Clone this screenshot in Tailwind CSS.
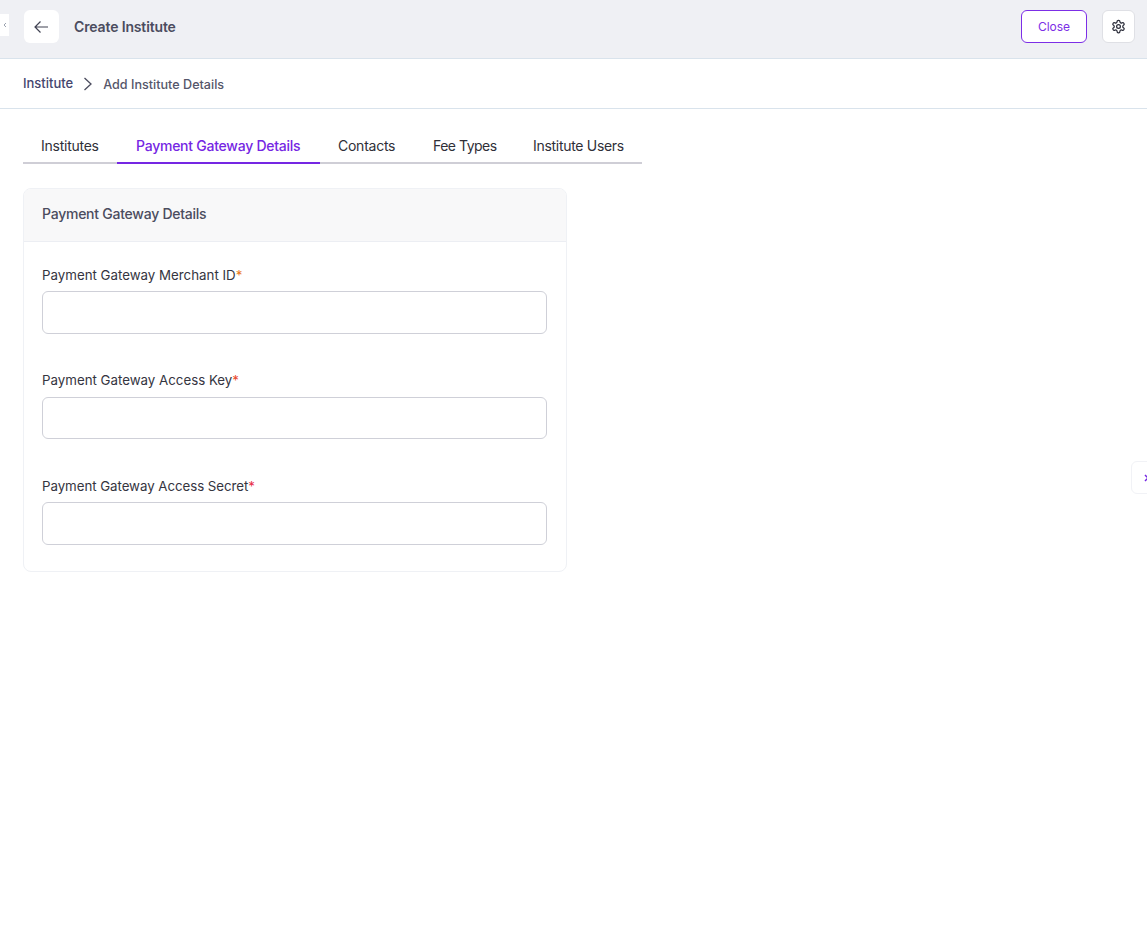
<!DOCTYPE html>
<html lang="en">
<head>
  <meta charset="UTF-8" />
  <title>Create Institute</title>
  <script src="https://cdn.jsdelivr.net/npm/@tailwindcss/browser@4"></script>
</head>
<body class="bg-white font-['Inter',sans-serif] min-h-screen overflow-hidden relative">

  <!-- sidebar toggle -->
  <div class="absolute left-0 top-[14px] w-[9px] h-[22px] bg-white flex items-center justify-center">
    <svg class="w-[6px] h-[6px]" viewBox="0 0 6 6" fill="none" stroke="#9ca3af" stroke-width="1"><path d="M4 1 L2 3 L4 5"/></svg>
  </div>

  <!-- Header -->
  <div class="h-[59px] bg-[#eff0f4] border-b border-[#d9e3ec] flex items-center pl-6 pr-3 pb-[5px]">
    <button class="w-[35px] h-[33px] bg-white rounded-md flex items-center justify-center">
      <svg class="w-[16px] h-[16px] -ml-[1px]" viewBox="0 0 16 16" fill="none" stroke="#404252" stroke-width="1.2"><path d="M15 8H2M7.5 2.5 2 8l5.500 5.500"/></svg>
    </button>
    <h1 class="ml-[15px] text-sm font-semibold tracking-[-0.14px] text-[#4b4c5e]">Create Institute</h1>
    <button class="ml-auto w-[66px] h-[33px] bg-white border border-[#7c2ee6] rounded-md text-xs text-[#7c2ee6]">Close</button>
    <button class="ml-[15px] w-[33px] h-[33px] bg-white border border-[#dfe0e5] rounded-md flex items-center justify-center">
      <svg class="w-[15px] h-[15px]" viewBox="0 0 24 24" fill="none" stroke="#2b2d3a" stroke-width="2" stroke-linecap="round" stroke-linejoin="round"><circle cx="12" cy="12" r="3"/><path d="M12.220 2h-.44a2 2 0 0 0-2 2v.18a2 2 0 0 1-1 1.730l-.43.25a2 2 0 0 1-2 0l-.15-.08a2 2 0 0 0-2.730.73l-.22.38a2 2 0 0 0 .73 2.730l.15.1a2 2 0 0 1 1 1.720v.51a2 2 0 0 1-1 1.740l-.15.09a2 2 0 0 0-.73 2.730l.22.38a2 2 0 0 0 2.730.73l.15-.08a2 2 0 0 1 2 0l.43.25a2 2 0 0 1 1 1.730V20a2 2 0 0 0 2 2h.44a2 2 0 0 0 2-2v-.18a2 2 0 0 1 1-1.730l.43-.25a2 2 0 0 1 2 0l.15.08a2 2 0 0 0 2.730-.73l.22-.39a2 2 0 0 0-.73-2.730l-.15-.08a2 2 0 0 1-1-1.740v-.5a2 2 0 0 1 1-1.740l.15-.09a2 2 0 0 0 .73-2.730l-.22-.38a2 2 0 0 0-2.730-.73l-.15.08a2 2 0 0 1-2 0l-.43-.25a2 2 0 0 1-1-1.730V4a2 2 0 0 0-2-2z"/></svg>
    </button>
  </div>

  <!-- Breadcrumb -->
  <div class="h-[50px] border-b border-[#d9e3ec] flex items-center pl-[23px]">
    <span class="text-[13px] font-medium text-[#45466e]">Institute</span>
    <svg class="ml-[9px] w-[12px] h-[16px]" viewBox="0 0 12 16" fill="none" stroke="#4b4c5e" stroke-width="1.3"><path d="M2.500 2 L9 8 L2.500 14"/></svg>
    <span class="ml-[9px] mt-[3px] text-[12.6px] font-medium text-[#55566a]">Add Institute Details</span>
  </div>

  <!-- Tabs -->
  <div class="mt-[19px] ml-[23px] w-[619px] flex border-b-2 border-[#cfced6] h-[36px] whitespace-nowrap tracking-[-0.25px]">
    <a class="w-[94px] shrink-0 pl-[18px] h-[36px] text-sm text-[#2f2f38] leading-[36px]">Institutes</a>
    <a class="w-[203px] shrink-0 pl-[19px] h-[36px] text-sm font-medium text-[#7526e3] leading-[36px] border-b-2 border-[#7526e3]">Payment Gateway Details</a>
    <a class="w-[95px] shrink-0 pl-[18px] h-[36px] text-sm text-[#2f2f38] leading-[36px]">Contacts</a>
    <a class="w-[100px] shrink-0 pl-[18px] h-[36px] text-sm tracking-[-0.5px] text-[#2f2f38] leading-[36px]">Fee Types</a>
    <a class="w-[127px] shrink-0 pl-[18px] h-[36px] text-sm tracking-[-0.3px] text-[#2f2f38] leading-[36px]">Institute Users</a>
  </div>

  <!-- Card -->
  <div class="mt-[24px] ml-[23px] w-[544px] h-[384px] border border-[#eff1f5] rounded-lg overflow-hidden">
    <div class="h-[53px] bg-[#f8f8f9] border-b border-[#eceef3] pl-[18px] pb-[2px] flex items-center text-sm font-medium tracking-[-0.25px] text-[#4b4c5e]">Payment Gateway Details</div>
    <div class="pl-[18px] pr-[19px] pt-[24px]">
      <label class="block text-[13.3px] text-[#35353f] leading-[18px]">Payment Gateway Merchant ID<span class="text-[#ea7a1e]">*</span></label>
      <input class="block mt-[7px] w-full h-[43px] border border-[#cfd0d8] rounded-md" />
      <label class="block mt-[37px] text-[13.3px] text-[#35353f] leading-[18px]">Payment Gateway Access Key<span class="text-[#ea4a2e]">*</span></label>
      <input class="block mt-[8px] w-full h-[42px] border border-[#cfd0d8] rounded-md" />
      <label class="block mt-[38px] text-[13.3px] tracking-[-0.05px] text-[#35353f] leading-[18px]">Payment Gateway Access Secret<span class="text-[#e8304a]">*</span></label>
      <input class="block mt-[7px] w-full h-[43px] border border-[#cfd0d8] rounded-md" />
    </div>
  </div>

  <!-- right panel toggle -->
  <div class="absolute right-[-16px] top-[461px] w-[32px] h-[33px] bg-white border border-[#f1f2f6] rounded-md flex items-center pl-[12px]">
    <svg class="w-[6px] h-[8px]" viewBox="0 0 6 8" fill="none" stroke="#7526e3" stroke-width="1.500"><path d="M1 1 L4 4 L1 7"/></svg>
  </div>
</body>
</html>
